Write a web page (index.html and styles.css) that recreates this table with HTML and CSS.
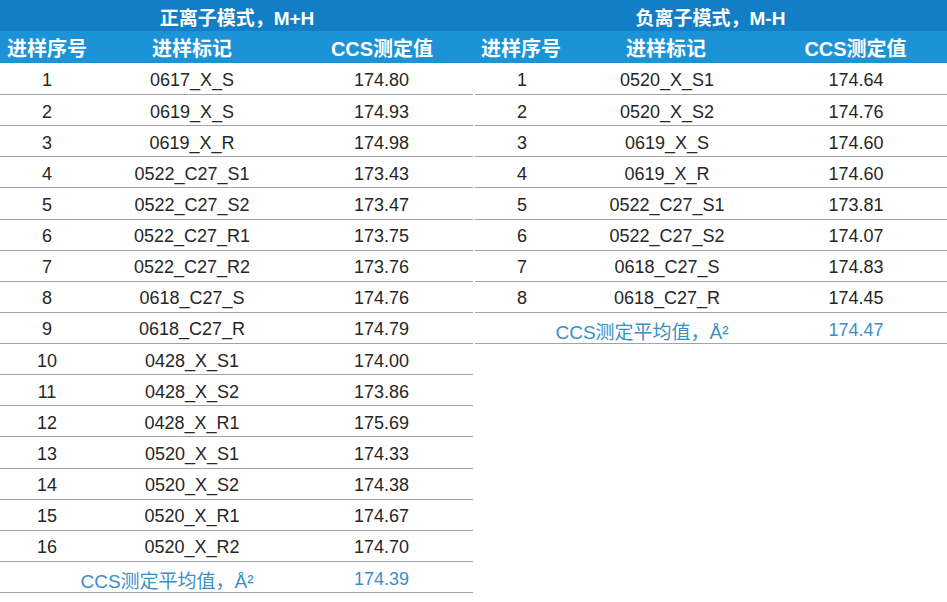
FILE: index.html
```html
<!DOCTYPE html>
<html lang="zh">
<head>
<meta charset="utf-8">
<link rel="stylesheet" href="styles.css">
</head>
<body>
<div class="page">
  <section class="tbl left">
    <div class="title">正离子模式，M+H</div>
    <div class="row head"><span>进样序号</span><span>进样标记</span><span>CCS测定值</span></div>
    <div class="row first"><span>1</span><span>0617_X_S</span><span>174.80</span></div>
    <div class="row"><span>2</span><span>0619_X_S</span><span>174.93</span></div>
    <div class="row"><span>3</span><span>0619_X_R</span><span>174.98</span></div>
    <div class="row"><span>4</span><span>0522_C27_S1</span><span>173.43</span></div>
    <div class="row"><span>5</span><span>0522_C27_S2</span><span>173.47</span></div>
    <div class="row"><span>6</span><span>0522_C27_R1</span><span>173.75</span></div>
    <div class="row"><span>7</span><span>0522_C27_R2</span><span>173.76</span></div>
    <div class="row"><span>8</span><span>0618_C27_S</span><span>174.76</span></div>
    <div class="row"><span>9</span><span>0618_C27_R</span><span>174.79</span></div>
    <div class="row"><span>10</span><span>0428_X_S1</span><span>174.00</span></div>
    <div class="row"><span>11</span><span>0428_X_S2</span><span>173.86</span></div>
    <div class="row"><span>12</span><span>0428_X_R1</span><span>175.69</span></div>
    <div class="row"><span>13</span><span>0520_X_S1</span><span>174.33</span></div>
    <div class="row"><span>14</span><span>0520_X_S2</span><span>174.38</span></div>
    <div class="row"><span>15</span><span>0520_X_R1</span><span>174.67</span></div>
    <div class="row"><span>16</span><span>0520_X_R2</span><span>174.70</span></div>
    <div class="row avg"><span class="avg-label">CCS测定平均值，Å²</span><span>174.39</span></div>
  </section>
  <section class="tbl right">
    <div class="title">负离子模式，M-H</div>
    <div class="row head"><span>进样序号</span><span>进样标记</span><span>CCS测定值</span></div>
    <div class="row first"><span>1</span><span>0520_X_S1</span><span>174.64</span></div>
    <div class="row"><span>2</span><span>0520_X_S2</span><span>174.76</span></div>
    <div class="row"><span>3</span><span>0619_X_S</span><span>174.60</span></div>
    <div class="row"><span>4</span><span>0619_X_R</span><span>174.60</span></div>
    <div class="row"><span>5</span><span>0522_C27_S1</span><span>173.81</span></div>
    <div class="row"><span>6</span><span>0522_C27_S2</span><span>174.07</span></div>
    <div class="row"><span>7</span><span>0618_C27_S</span><span>174.83</span></div>
    <div class="row"><span>8</span><span>0618_C27_R</span><span>174.45</span></div>
    <div class="row avg"><span class="avg-label">CCS测定平均值，Å²</span><span>174.47</span></div>
  </section>
</div>
</body>
</html>
```
FILE: styles.css
```css
html, body {
  margin: 0;
  padding: 0;
  background: #ffffff;
}
.page {
  display: flex;
  width: 947px;
  font-family: "Liberation Sans", "Noto Sans CJK SC", sans-serif;
  color: #262626;
}
.tbl {
  display: flex;
  flex-direction: column;
}
.tbl.left {
  width: 474px;
}
.tbl.right {
  width: 473px;
}
.title {
  height: 31px;
  background: #117ec5;
  color: #ffffff;
  font-family: "Liberation Sans", "Noto Sans CJK SC", sans-serif;
  font-weight: bold;
  font-size: 19px;
  display: flex;
  align-items: center;
  justify-content: center;
  padding-top: 1px;
  box-sizing: border-box;
}
.row {
  display: grid;
  grid-template-columns: 94px 196px 1fr;
  align-items: center;
  height: 31.125px;
  box-sizing: border-box;
  padding-top: 4px;
  border-bottom: 1px solid #a3a3a3;
  font-size: 18px;
}
.tbl.left .row {
  margin-right: 1px;
}
.tbl.right .row {
  margin-left: 1px;
}
.row span {
  text-align: center;
}
.row.head {
  height: 32px;
  padding-top: 1px;
  background: #1b93d6;
  color: #ffffff;
  font-weight: bold;
  font-size: 20px;
  border-bottom: none;
  margin: 0 !important;
}
.row.first {
  height: 32px;
}
.row.avg {
  color: #3a8ec8;
}
.avg-label {
  grid-column: 1 / span 2;
  padding-left: 44px;
  font-size: 19px;
}
.row.avg span:last-child {
  grid-column: 3;
}
```
